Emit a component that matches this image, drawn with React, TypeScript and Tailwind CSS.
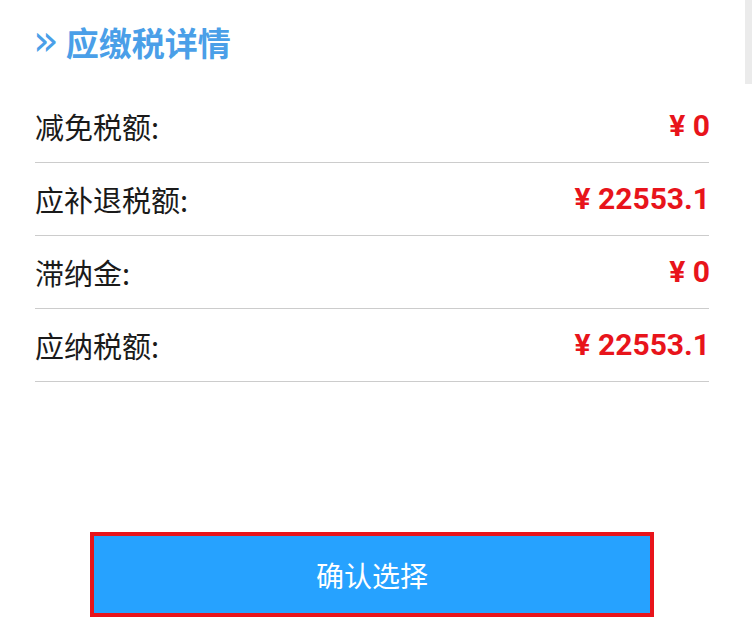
import React from "react";

const rows = [
  { label: "减免税额:", value: "¥ 0" },
  { label: "应补退税额:", value: "¥ 22553.1" },
  { label: "滞纳金:", value: "¥ 0" },
  { label: "应纳税额:", value: "¥ 22553.1" },
];

export default function App() {
  return (
    <div
      className="relative w-[752px] h-[630px] bg-white overflow-hidden"
      style={{ fontFamily: '"Noto Sans CJK SC", "Noto Sans", sans-serif' }}
    >
      <div className="absolute right-0 top-0 w-[7px] h-[84px] bg-[#ebebeb]" />
      <div className="px-[35px] w-[744px]">
        <div className="flex items-center h-[90px] pb-[6px]">
          <span
            className="text-[#4a9fe8] text-[42px] leading-none ml-[-2px] mr-[7px] mt-[-3px]"
            style={{ fontFamily: '"DejaVu Sans", sans-serif' }}
          >
            »
          </span>
          <span className="text-[#4a9fe8] text-[33px] font-bold leading-none">应缴税详情</span>
        </div>
        {rows.map((r, i) => (
          <div
            key={i}
            className="flex items-center justify-between h-[72px] border-b border-[#cccccc] box-content"
          >
            <span className="text-[29px] text-[#1a1a1a] leading-none">{r.label}</span>
            <span
              className="text-[30px] font-bold text-[#e8141b] leading-none mr-[-1px]"
              style={{ fontFamily: 'Roboto, "Noto Sans CJK SC", sans-serif' }}
            >
              {r.value}
            </span>
          </div>
        ))}
        <div className="h-[150px]" />
        <div className="mx-auto w-[564px] h-[85px] border-[4px] border-[#e8141b] bg-[#26a2ff] flex items-center justify-center">
          <span className="text-white text-[28px] leading-none">确认选择</span>
        </div>
      </div>
    </div>
  );
}
